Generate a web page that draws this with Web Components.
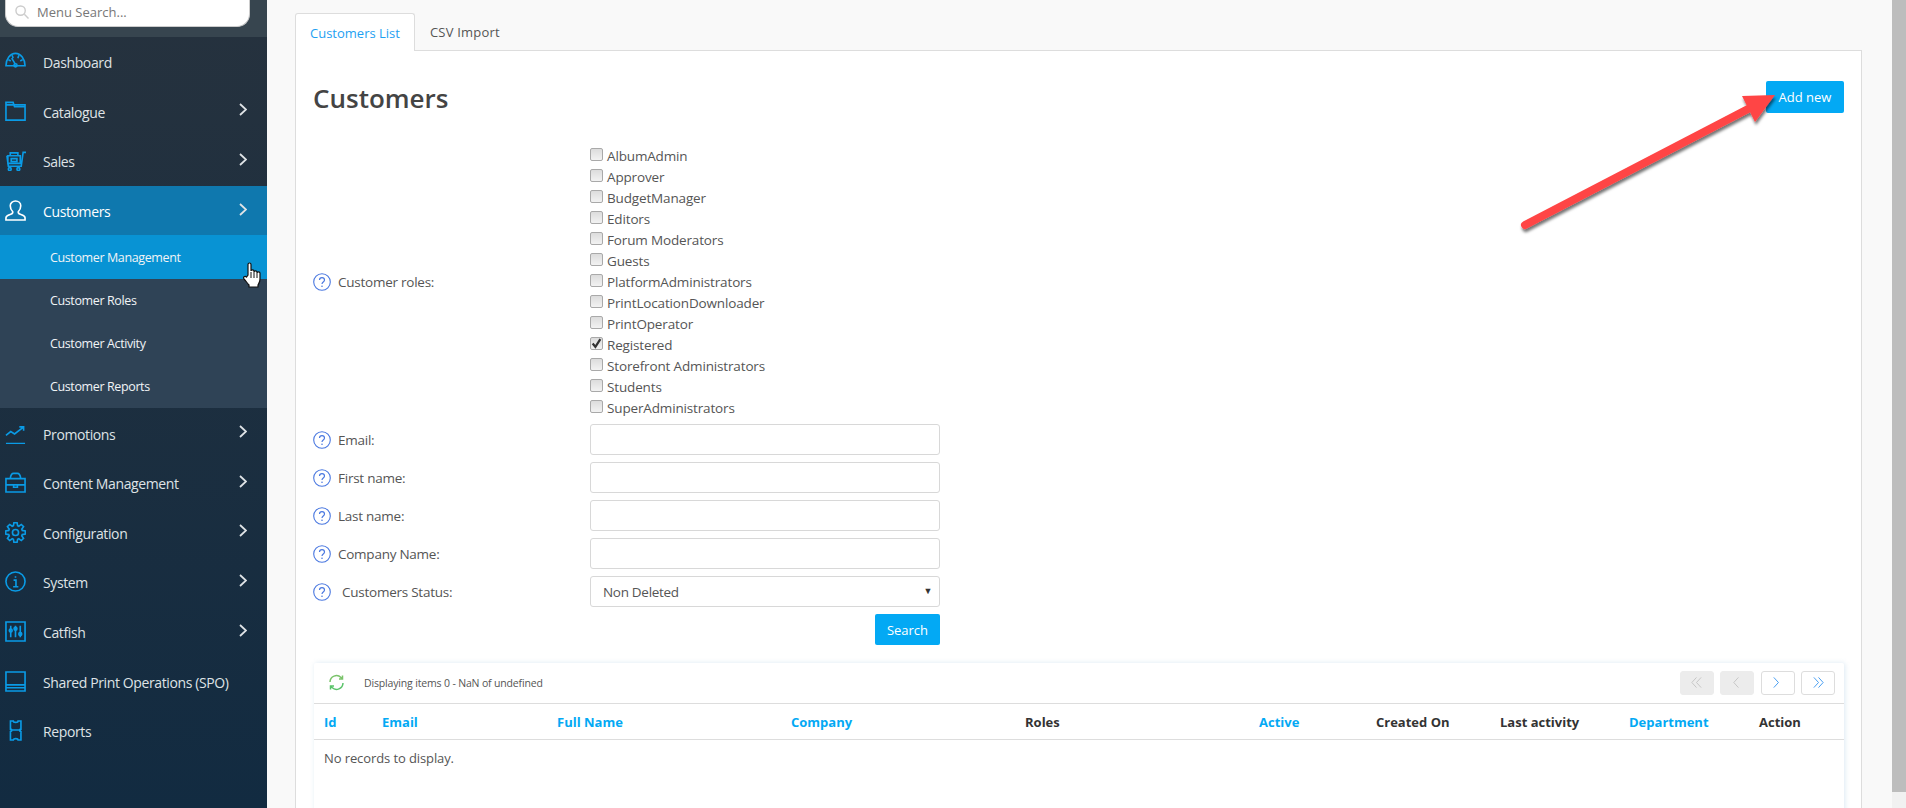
<!DOCTYPE html>
<html>
<head>
<meta charset="utf-8">
<title>Customers</title>
<style>
  html, body { margin: 0; height: 100%; overflow: hidden; }
  body { font-family: "Open Sans", "Noto Sans", sans-serif; color: #444; }
</style>
</head>
<body>
<admin-page>
  <side-nav slot="nav">
    <nav-item icon="dash" label="Dashboard" flat></nav-item>
    <nav-item icon="folder" label="Catalogue"></nav-item>
    <nav-item icon="cart" label="Sales"></nav-item>
    <nav-item icon="user" label="Customers" open></nav-item>
    <sub-nav>
      <sub-item active>Customer Management</sub-item>
      <sub-item>Customer Roles</sub-item>
      <sub-item>Customer Activity</sub-item>
      <sub-item>Customer Reports</sub-item>
    </sub-nav>
    <nav-item icon="trend" label="Promotions"></nav-item>
    <nav-item icon="case" label="Content Management"></nav-item>
    <nav-item icon="gear" label="Configuration"></nav-item>
    <nav-item icon="info" label="System"></nav-item>
    <nav-item icon="sliders" label="Catfish"></nav-item>
    <nav-item icon="panel" label="Shared Print Operations (SPO)" flat></nav-item>
    <nav-item icon="ticket" label="Reports" flat></nav-item>
  </side-nav>
  <customers-panel></customers-panel>
</admin-page>

<script>
// gear outline with 8 teeth, worked out instead of typed by hand
function gearPath() {
  const pts = [];
  for (let i = 0; i < 8; i++) {
    const a = i * Math.PI / 4 - Math.PI / 2;
    [[-0.3, 7.4], [-0.16, 10.4], [0.16, 10.4], [0.3, 7.4]].forEach(([d, r]) => {
      pts.push((11 + r * Math.cos(a + d)).toFixed(2) + ' ' + (11 + r * Math.sin(a + d)).toFixed(2));
    });
  }
  return 'M' + pts.join('L') + 'Z';
}

// icons for the left menu, all on a 22x22 box
const navIcons = {
  dash: '<path d="M1 15.5C1 8.5 5.5 2.5 11 2.5S21 8.5 21 15.5Z"/><path d="M7.5 4.5l1 3M3.5 9l2.5 1.5M18.5 9L16 10.5M14.5 4.5l-1 3M7 7.5l4 6.500"/><circle cx="11" cy="15" r="1.600"/>',
  folder: '<path d="M1 4h20v16H1zM1 4V1.500h7.500L10 6h11"/>',
  cart: '<path d="M3 6h13v8H3zM2 6l1.500 11H17l2-14.500h3M5.500 6V3h8v3M6.500 9h6v3h-6z"/><circle cx="5" cy="20" r="1.500"/><circle cx="14" cy="20" r="1.500"/>',
  user: '<path d="M1 21v-2.500c0-2 2-2.500 5-3.500 2-.7 2.500-1.500 2-3-2-2-2.500-4-2.500-6C5.500 3 8 1 11 1s5.500 2 5.500 5c0 2-.5 4-2.500 6-.5 1.500 0 2.300 2 3 3 1 5 1.500 5 3.500V21Z"/>',
  trend: '<path d="M1 21.500h20M1 13l5-4 4 2.500 9-7M15 4h4.500v4"/>',
  case: '<path d="M1 7h20v14H1zM1 13.500h20M5.500 7C6 3 7 1.500 9 1.500h4c2 0 3 1.500 3.500 5.500M9 13.500v2.500h4v-2.500"/>',
  gear: '<path d="' + gearPath() + '"/><circle cx="11" cy="11" r="3.200"/>',
  info: '<circle cx="11" cy="11" r="10"/><path d="M9 9.500h2.500V16M8.500 16.500h5.500M11 5.500v1.500"/>',
  sliders: '<path d="M1 1h20v20H1zM6 5v12M11 5v12M16 5v12"/><circle cx="6" cy="10" r="1.500"/><circle cx="11" cy="8" r="1.500"/><circle cx="16" cy="13.500" r="1.500"/>',
  panel: '<path d="M1 1h20v20H1zM1 14.500h20M1 17.500h20"/>',
  ticket: '<path d="M5.500 1h3c0 2 5 2 5 0h3v8.500c-2 0-2 2.500 0 2.500v9h-3c0-2-5-2-5 0h-3v-9c2 0 2-2.500 0-2.500ZM5.500 10.500h11" transform="translate(.2 0)"/>'
};

class AdminPage extends HTMLElement {
  constructor() {
    super();
    this.attachShadow({ mode: 'open' });
    this.shadowRoot.innerHTML = `
      <style>
        :host { display: flex; height: 808px; width: 1906px; background: #f9f9f9; position: relative; overflow: hidden; }
        .main { flex: 1; min-width: 0; padding: 13px 30px 0 28px; }
        .bar { width: 14px; background: #f1f1f1; }
        .thumb { height: 792px; background: #bdbdbd; }
      </style>
      <slot name="nav"></slot>
      <div class="main"><slot></slot></div>
      <div class="bar"><div class="thumb"></div></div>
    `;
  }
}

class SideNav extends HTMLElement {
  constructor() {
    super();
    this.attachShadow({ mode: 'open' });
    this.shadowRoot.innerHTML = `
      <style>
        :host { display: flex; flex-direction: column; flex: none; width: 267px; height: 808px;
                background: linear-gradient(#26323e, #122b41); position: relative; }
        .search { height: 37px; flex: none; box-sizing: border-box; background: #37454f; padding-left: 5px; }
        .box { width: 245px; height: 27px; background: #fff; border-radius: 0 0 13px 13px; border: 1px solid #ccc; border-top: 0;
               box-sizing: border-box; display: flex; align-items: center; gap: 8px; padding: 0 0 2px 9px;
               font-size: 13px; color: #777; }
        svg.s { width: 14px; height: 14px; fill: none; stroke: #ccc; stroke-width: 1.500; }
        .hand { position: absolute; left: 243px; top: 261px; width: 19px; height: 29px; }
      </style>
      <div class="search">
        <div class="box">
          <svg class="s" viewBox="0 0 15 15"><circle cx="6" cy="6" r="5"/><path d="M10 10l4.500 4.500"/></svg>
          <span>Menu Search...</span>
        </div>
      </div>
      <slot></slot>
      <svg class="hand" viewBox="0 0 19 29">
        <path d="M5 14V3.500C5 1.500 8 1.500 8 3.500V10c0-1.500 3-1.500 3 0v1c0-1.500 3-1.500 3 0v1c0-1.500 3-1.500 3 0v6c0 3-1 4-2 6v2H6v-2c-2-2-3-4-5-6-1.500-2 1-3.500 2.500-2Z"
              fill="#fff" stroke="#111" stroke-width="1.200"/>
        <path d="M8 11v6M11 11v6M14 12v5" stroke="#111" stroke-width="1"/>
      </svg>
    `;
  }
}

class NavItem extends HTMLElement {
  constructor() {
    super();
    this.attachShadow({ mode: 'open' });
  }
  connectedCallback() {
    const open = this.hasAttribute('open');
    const flat = this.hasAttribute('flat');
    this.shadowRoot.innerHTML = `
      <style>
        :host { display: flex; align-items: center; height: 49.600px; flex: none; box-sizing: border-box; padding: 2px 0 0 5px;
                color: ${open ? '#fff' : '#dfe3e6'}; font-size: 14px; letter-spacing: -.38px; background: ${open ? '#0f78ae' : 'transparent'}; }
        .i { width: 21px; height: 21px; fill: none; stroke: ${open ? '#fff' : '#0a9be6'}; stroke-width: 1.700; flex: none; margin-top: -2px; }
        .t { margin-left: 17px; flex: 1; white-space: nowrap; }
        .c { width: 8px; height: 13px; fill: none; stroke: #dfe3e6; stroke-width: 1.800; margin-right: 20px; margin-top: -5px; }
      </style>
      <svg class="i" viewBox="0 0 22 22">${navIcons[this.getAttribute('icon')]}</svg>
      <span class="t">${this.getAttribute('label')}</span>
      ${flat ? '' : '<svg class="c" viewBox="0 0 8 13"><path d="M1 1l6 5.500-6 5.500"/></svg>'}
    `;
  }
}

class SubNav extends HTMLElement {
  constructor() {
    super();
    this.attachShadow({ mode: 'open' });
    this.shadowRoot.innerHTML = `
      <style>:host { display: block; background: #2f4356; flex: none; }</style>
      <slot></slot>
    `;
  }
}

class SubItem extends HTMLElement {
  constructor() {
    super();
    this.attachShadow({ mode: 'open' });
    this.shadowRoot.innerHTML = `
      <style>
        :host { display: flex; align-items: center; height: 43.250px; padding-left: 50px; font-size: 12.500px; letter-spacing: -.38px; color: #f1f4f6; }
        :host([active]) { background: #0893d4; }
      </style>
      <slot></slot>
    `;
  }
}

class HelpLabel extends HTMLElement {
  constructor() {
    super();
    this.attachShadow({ mode: 'open' });
    this.shadowRoot.innerHTML = `
      <style>
        :host { display: flex; align-items: center; gap: var(--gap, 7px); font-size: 13.500px; letter-spacing: -.25px; color: #555; }
        svg { width: 18px; height: 18px; flex: none; }
      </style>
      <svg viewBox="0 0 18 18">
        <circle cx="9" cy="9" r="8.300" fill="none" stroke="#4a78e0" stroke-width="1.100"/>
        <path d="M6.500 7c0-3.200 5-3.200 5 0 0 2-2.500 2-2.500 4" fill="none" stroke="#4a78e0" stroke-width="1.200"/>
        <circle cx="9" cy="13.300" r=".8" fill="#4a78e0"/>
      </svg>
      <span style="margin-top:1px"><slot></slot></span>
    `;
  }
}

class RoleCheck extends HTMLElement {
  constructor() {
    super();
    this.attachShadow({ mode: 'open' });
  }
  connectedCallback() {
    const on = this.hasAttribute('checked');
    this.shadowRoot.innerHTML = `
      <style>
        :host { display: flex; align-items: center; height: 21px; gap: 4px; font-size: 13.500px; letter-spacing: -.15px; color: #555; white-space: nowrap; }
        .b { width: 13px; height: 13px; box-sizing: border-box; border: 1px solid #a9a9a9; border-radius: 2px; background: linear-gradient(#dcdcdc, #f2f2f2);
             flex: none; margin-top: -3px; position: relative; }
        svg { position: absolute; left: 0; top: 0; width: 11px; height: 11px; }
      </style>
      <span class="b">${on ? '<svg viewBox="0 0 10 10"><path d="M1.500 5l2.500 3 4.500-7" fill="none" stroke="#333" stroke-width="2"/></svg>' : ''}</span>
      <span><slot></slot></span>
    `;
  }
}

class FormRow extends HTMLElement {
  constructor() {
    super();
    this.attachShadow({ mode: 'open' });
    this.shadowRoot.innerHTML = `
      <style>
        :host { display: grid; grid-template-columns: 277px 350px; align-items: center; margin-bottom: 7px; }
      </style>
      <slot name="label"></slot>
      <slot></slot>
    `;
  }
}

class TextBox extends HTMLElement {
  constructor() {
    super();
    this.attachShadow({ mode: 'open' });
    this.shadowRoot.innerHTML = `
      <style>
        :host { display: flex; align-items: center; justify-content: space-between; box-sizing: border-box; height: 31px;
                border: 1px solid #d8d8d8; border-radius: 3px; background: #fff; padding: 0 7px 0 12px;
                font-size: 13.500px; letter-spacing: -.3px; color: #555; }
        .a { font-size: 9px; color: #333; margin-top: -3px; }
      </style>
      <span><slot></slot></span>
      ${this.hasAttribute('select') ? '<span class="a">▼</span>' : ''}
    `;
  }
}

class DataGrid extends HTMLElement {
  constructor() {
    super();
    this.attachShadow({ mode: 'open' });
    const cols = [['Id',1],['Email',1],['Full Name',1],['Company',1],['Roles',0],['Active',1],['Created On',0],['Last activity',0],['Department',1],['Action',0]];
    const pager = [
      ['M7 1L2 6.500 7 12M12 1L7 6.500 12 12', 1],
      ['M8 1L3 6.500 8 12', 1],
      ['M3 1l5 5.500L3 12', 0],
      ['M2 1l5 5.500L2 12M7 1l5 5.500L7 12', 0]
    ];
    this.shadowRoot.innerHTML = `
      <style>
        :host { display: block; height: 200px; margin-left: 1px; background: #fff; box-shadow: 1px 0 5px rgba(120,170,210,.25); border-radius: 2px; }
        .tool { height: 41px; display: flex; align-items: center; border-bottom: 1px solid #ddd; box-sizing: border-box; padding: 0 9px 1px 14px; }
        .ref { width: 17px; height: 17px; fill: none; stroke-width: 1.500; flex: none; }
        .msg { margin-left: 19px; font-size: 10.500px; letter-spacing: -.16px; color: #555; flex: 1; }
        .pg { display: flex; gap: 6.500px; }
        .pg span { width: 34px; height: 24px; box-sizing: border-box; border: 1px solid #ddd; border-radius: 3px; display: flex; align-items: center; justify-content: center; }
        .pg span.off { background: #ececec; border-color: #ececec; }
        .pg svg { width: 13px; height: 13px; fill: none; stroke: #3c97f0; stroke-width: 1; }
        .pg .off svg { stroke: #c4c4c4; }
        .head { display: grid; grid-template-columns: 68px 175px 234px 234px 234px 117px 124px 129px 130px 1fr; height: 36px; align-items: center;
                border-bottom: 1px solid #ddd; box-sizing: border-box; font-size: 13px; font-weight: 700; color: #333; }
        .head div:first-child { padding-left: 10px; }
        .head .link { color: #03a9f4; }
        .empty { padding: 9px 10px; font-size: 13px; letter-spacing: -.1px; color: #555; }
      </style>
      <div class="tool">
        <svg class="ref" viewBox="0 0 17 17">
          <path d="M2 8a6.500 6.500 0 0 1 11-4.500l1.500 1.500M14.500 1.500V5H11" stroke="#7ac36a"/>
          <path d="M15 9a6.500 6.500 0 0 1-11 4.500L2.500 12M2.500 15.500V12H6" stroke="#5ac36a"/>
        </svg>
        <span class="msg">Displaying items 0 - NaN of undefined</span>
        <div class="pg">
          ${pager.map(p => `<span class="${p[1] ? 'off' : ''}"><svg viewBox="0 0 14 13"><path d="${p[0]}"/></svg></span>`).join('')}
        </div>
      </div>
      <div class="head">
        ${cols.map(c => `<div class="${c[1] ? 'link' : ''}">${c[0]}</div>`).join('')}
      </div>
      <div class="empty">No records to display.</div>
    `;
  }
}

class CustomersPanel extends HTMLElement {
  constructor() {
    super();
    this.attachShadow({ mode: 'open' });
    const roles = ['AlbumAdmin','Approver','BudgetManager','Editors','Forum Moderators','Guests','PlatformAdministrators','PrintLocationDownloader','PrintOperator','Registered','Storefront Administrators','Students','SuperAdministrators'];
    this.shadowRoot.innerHTML = `
      <style>
        :host { display: block; position: relative; }
        .tabs { display: flex; height: 37px; font-size: 13px; }
        .tab { padding: 0 14px; display: flex; align-items: center; color: #555; }
        .tab.csv { margin-left: 1px; letter-spacing: .2px; }
        .tab.on { color: #1e9ff2; background: #fff; border: 1px solid #ddd; border-bottom: 0; border-radius: 3px 3px 0 0; margin-bottom: -1px; position: relative; z-index: 1; }
        .card { background: #fff; border: 1px solid #ddd; border-bottom: 0; height: 758px; box-sizing: border-box; padding: 29px 17px 0 17px; }
        .top { display: flex; justify-content: space-between; align-items: flex-start; height: 65px; padding-top: 0; }
        h1 { margin: 0; font-size: 26px; font-weight: 600; color: #444; line-height: 36px; }
        .btn { background: #03a9f4; color: #fff; border-radius: 2px; font-size: 13px; display: flex; align-items: center; justify-content: center; }
        .add { width: 78px; height: 32px; margin-top: 1px; }
        .roles { display: grid; grid-template-columns: 277px 350px; align-items: center; margin-bottom: 6px; }
        .search { width: 65px; height: 31px; margin: 0 0 18px 562px; }
        .arrow { position: absolute; left: 1200px; top: 60px; width: 300px; height: 180px; overflow: visible; pointer-events: none; }
      </style>
      <div class="tabs">
        <div class="tab on">Customers List</div>
        <div class="tab csv">CSV Import</div>
      </div>
      <div class="card">
        <div class="top">
          <h1>Customers</h1>
          <div class="btn add">Add new</div>
        </div>
        <div class="roles">
          <help-label>Customer roles:</help-label>
          <div>
            ${roles.map(r => `<role-check ${r === 'Registered' ? 'checked' : ''}>${r}</role-check>`).join('')}
          </div>
        </div>
        <form-row><help-label slot="label">Email:</help-label><text-box></text-box></form-row>
        <form-row><help-label slot="label">First name:</help-label><text-box></text-box></form-row>
        <form-row><help-label slot="label">Last name:</help-label><text-box></text-box></form-row>
        <form-row><help-label slot="label">Company Name:</help-label><text-box></text-box></form-row>
        <form-row><help-label slot="label" style="--gap:11px">Customers Status:</help-label><text-box select>Non Deleted</text-box></form-row>
        <div class="btn search">Search</div>
        <data-grid></data-grid>
      </div>
      <svg class="arrow" viewBox="0 0 300 180">
        <defs><filter id="sh" x="-10%" y="-10%" width="120%" height="120%"><feDropShadow dx="1" dy="3" stdDeviation="1.500" flood-color="#000" flood-opacity=".55"/></filter></defs>
        <g filter="url(#sh)">
          <path d="M30 152L253 36" stroke="#ff4545" stroke-width="8" stroke-linecap="round" fill="none"/>
          <path d="M247 23L280 22 260 49Z" fill="#ff4545"/>
        </g>
      </svg>
    `;
  }
}

customElements.define('admin-page', AdminPage);
customElements.define('side-nav', SideNav);
customElements.define('nav-item', NavItem);
customElements.define('sub-nav', SubNav);
customElements.define('sub-item', SubItem);
customElements.define('help-label', HelpLabel);
customElements.define('role-check', RoleCheck);
customElements.define('form-row', FormRow);
customElements.define('text-box', TextBox);
customElements.define('data-grid', DataGrid);
customElements.define('customers-panel', CustomersPanel);
</script>
</body>
</html>
